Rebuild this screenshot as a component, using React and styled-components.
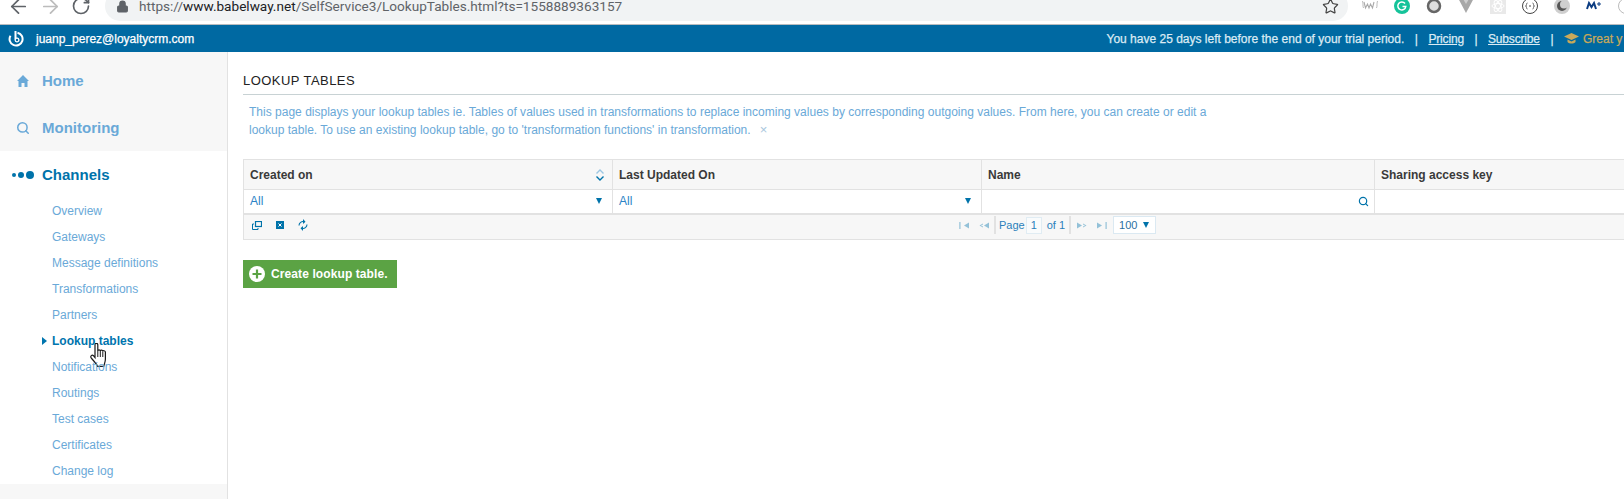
import React from "react";
import styled, { createGlobalStyle } from "styled-components";
import { ArrowLeft, ArrowRight, RotateCw, Lock, Star, Search } from "lucide-react";

const GlobalStyle = createGlobalStyle`
  html, body {
    margin: 0;
    padding: 0;
    background: #fff;
    overflow: hidden;
  }
  body {
    font-family: "Liberation Sans", Arial, sans-serif;
    font-size: 12px;
  }
`;

const Page = styled.div`
  width: 1624px;
  height: 499px;
  display: flex;
  flex-direction: column;
  overflow: hidden;
`;

// browser chrome
const BrowserBar = styled.div`
  height: 25px;
  flex: none;
  box-sizing: border-box;
  display: flex;
  align-items: flex-end;
  background: #fff;
  border-bottom: 1px solid #b9bcbf;
  overflow: hidden;
`;
const NavButtons = styled.div`
  width: 105px;
  flex: none;
  height: 24px;
  display: flex;
  align-items: center;
  gap: 9px;
  padding-left: 7px;
  box-sizing: border-box;
  margin-bottom: 6px;
  color: #5f6368;
`;
const UrlPill = styled.div`
  width: 1243px;
  height: 30px;
  flex: none;
  border-radius: 15px;
  background: #f1f3f4;
  display: flex;
  align-items: center;
  padding: 0 9px 0 11px;
  box-sizing: border-box;
  margin-bottom: 3px;
`;
const UrlText = styled.span`
  font-family: "Roboto", sans-serif;
  font-size: 13.6px;
  color: #5f6368;
  margin-left: 10px;
  flex: 1;
  b {
    font-weight: 400;
    color: #202124;
  }
`;
const Extensions = styled.div`
  flex: 1;
  display: flex;
  align-items: center;
  height: 24px;
  margin-bottom: 6px;
  padding-left: 14px;
  gap: 16px;
`;
const Ext = styled.svg`
  width: 16px;
  height: 16px;
  flex: none;
`;

// blue bar
const TopBar = styled.div`
  height: 27px;
  flex: none;
  background: #0069a2;
  color: #fff;
  display: flex;
  align-items: center;
  font-size: 12px;
  -webkit-text-stroke: 0.25px currentColor;
  white-space: nowrap;
`;
const Logo = styled.svg`
  width: 16px;
  height: 16px;
  margin-left: 8px;
  margin-right: 12px;
  flex: none;
`;
const Email = styled.span`
  flex: 1;
`;
const Notice = styled.span`
  color: #dcebf4;
`;
const TopLink = styled.a`
  color: #dcebf4;
  text-decoration: underline;
  letter-spacing: -0.17px;
`;
const Sep = styled.span`
  color: #dcebf4;
  margin: 0 10.5px;
`;
const Gold = styled.span`
  color: #c9a95a;
  display: inline-flex;
  align-items: center;
  gap: 4px;
  width: 60px;
  flex: none;
  overflow: hidden;
`;

const Body = styled.div`
  flex: 1;
  display: flex;
  min-height: 0;
`;

// sidebar
const Sidebar = styled.nav`
  width: 228px;
  flex: none;
  box-sizing: border-box;
  border-right: 1px solid #e2e2e2;
  background: #f7f7f7;
  padding-top: 5px;
  display: flex;
  flex-direction: column;
`;
const TopItem = styled.div`
  height: 47px;
  display: flex;
  align-items: center;
  font-size: 15px;
  font-weight: 700;
  color: ${(p) => (p.$active ? "#0073aa" : "#6aa9d8")};
`;
const ItemIcon = styled.span`
  width: 42px;
  display: flex;
  justify-content: center;
  padding-left: 4px;
  box-sizing: border-box;
  flex: none;
  align-items: center;
  gap: 2px;
`;
const Dot = styled.i`
  display: block;
  border-radius: 50%;
  background: #0073aa;
  width: ${(p) => p.$s}px;
  height: ${(p) => p.$s}px;
`;
const ChannelSection = styled.div`
  background: #fff;
  height: 333px;
  box-sizing: border-box;
`;
const SubList = styled.ul`
  list-style: none;
  margin: 0;
  padding: 0 0 0 52px;
`;
const SubItem = styled.li`
  position: relative;
  height: 26px;
  line-height: 26px;
  font-size: 12px;
  color: ${(p) => (p.$active ? "#0075ae" : "#6aa9d8")};
  font-weight: ${(p) => (p.$active ? 700 : 400)};
  ${(p) =>
    p.$active &&
    `&::before {
      content: "";
      position: absolute;
      left: -10px;
      top: 9px;
      border-left: 5px solid #0075ae;
      border-top: 4px solid transparent;
      border-bottom: 4px solid transparent;
    }`}
`;
const Cursor = styled.svg`
  position: absolute;
  left: 38px;
  top: 15px;
  width: 18px;
  height: 24px;
`;

// main content
const Main = styled.main`
  flex: 1;
  min-width: 0;
  padding: 20px 0 0 15px;
`;
const Title = styled.h1`
  margin: 0;
  font-size: 13px;
  font-weight: 400;
  color: #222;
  letter-spacing: 0.45px;
  height: 22px;
  line-height: 17px;
  border-bottom: 1px solid #c8d2d4;
`;
const Intro = styled.p`
  margin: 0 0 0 6px;
  padding-top: 9px;
  width: 965px;
  height: 55px;
  font-size: 12px;
  line-height: 17px;
  color: #6aa9d8;
  letter-spacing: 0.01px;
`;
const CloseMark = styled.span`
  margin-left: 9px;
  color: #a9c6dd;
  font-size: 13px;
`;
const Table = styled.div`
  border: 1px solid #e2e2e2;
  border-right: none;
  margin-right: -20px;
`;
const Row = styled.div`
  display: grid;
  grid-template-columns: 369px 369px 393px 1fr;
`;
const HeadCell = styled.div`
  height: 30px;
  box-sizing: border-box;
  background: #f7f7f7;
  border-right: 1px solid #e2e2e2;
  border-bottom: 1px solid #e2e2e2;
  padding: 0 7px 0 6px;
  display: flex;
  align-items: center;
  justify-content: space-between;
  font-weight: 700;
  color: #3a3a3a;
`;
const FilterCell = styled.div`
  height: 23px;
  box-sizing: border-box;
  background: #fff;
  border-right: 1px solid #e2e2e2;
  padding: 0 ${(p) => p.$right || 10}px 1px 6px;
  display: flex;
  align-items: center;
  justify-content: space-between;
  color: #2b83c6;
`;
const Caret = styled.i`
  display: block;
  border-top: 6px solid #0073aa;
  border-left: 3.5px solid transparent;
  border-right: 3.5px solid transparent;
`;
const Toolbar = styled.div`
  height: 26px;
  box-sizing: border-box;
  background: #f7f7f7;
  border-top: 2px solid #e2e2e2;
  padding-bottom: 4px;
  display: flex;
  align-items: center;
`;
const ToolIcons = styled.div`
  display: flex;
  align-items: center;
  gap: 14px;
  padding-left: 8px;
  width: 714px;
  flex: none;
  box-sizing: border-box;
`;
const Pager = styled.div`
  display: flex;
  align-items: center;
  color: #2b7fbb;
  font-size: 11px;
`;
const PagerIcon = styled.svg`
  width: 11px;
  height: 7px;
  margin-right: ${(p) => p.$gap}px;
  opacity: 0.4;
`;
const PagerSep = styled.i`
  display: block;
  width: 2px;
  height: 18px;
  background: #e2e2e2;
  margin: 0 ${(p) => p.$after}px 0 ${(p) => p.$before}px;
`;
const PageBox = styled.span`
  display: inline-block;
  width: 14px;
  height: 15px;
  line-height: 15px;
  background: #f9fbfc;
  border: 1px solid #e0ecf3;
  margin: 0 5px 0 1px;
  text-align: center;
`;
const SizeBox = styled.div`
  display: flex;
  align-items: center;
  justify-content: space-between;
  width: 43px;
  height: 18px;
  box-sizing: border-box;
  background: #fff;
  border: 1px solid #dbe9f2;
  padding: 0 6px 0 5px;
  font-size: 11px;
  color: #2b6f9f;
`;
const CreateButton = styled.button`
  display: flex;
  align-items: center;
  gap: 6px;
  width: 154px;
  height: 28px;
  margin-top: 20px;
  padding: 0 0 0 6px;
  box-sizing: border-box;
  border: none;
  background: #5ba344;
  color: #fff;
  font: 700 12px "Liberation Sans", Arial, sans-serif;
  letter-spacing: 0.1px;
`;

const subItems = [
  "Overview",
  "Gateways",
  "Message definitions",
  "Transformations",
  "Partners",
  "Lookup tables",
  "Notifications",
  "Routings",
  "Test cases",
  "Certificates",
  "Change log",
];

function PagerGlyph({ dir, bar, gap }) {
  return (
    <PagerIcon viewBox="0 0 11 7" $gap={gap}>
      <g fill="#0073aa" transform={dir === "right" ? "" : "translate(11 0) scale(-1 1)"}>
        <path d="M0 .5l5 3-5 3z" />
        {bar ? <rect x="8.500" y="0" width="1.200" height="7" /> : <path d="M6 1.500l3.500 2-3.500 2v-1l2-1-2-1z" />}
      </g>
    </PagerIcon>
  );
}

export default function App() {
  return (
    <Page>
      <GlobalStyle />
      <BrowserBar>
        <NavButtons>
          <ArrowLeft size={23} strokeWidth={1.8} />
          <ArrowRight size={23} strokeWidth={1.8} color="#bcbcbc" />
          <RotateCw size={20} strokeWidth={2} />
        </NavButtons>
        <UrlPill>
          <Lock size={13} fill="#5f6368" color="#5f6368" />
          <UrlText>
            https://<b>www.babelway.net</b>/SelfService3/LookupTables.html?ts=1558889363157
          </UrlText>
          <Star size={17} color="#444" strokeWidth={1.7} />
        </UrlPill>
        <Extensions>
          <Ext viewBox="0 0 16 16">
            <path d="M2 4l1.500 6 2-4 1.500 4 1.500-4 2 4 1.500-6" fill="none" stroke="#aaa" strokeWidth="1.100" />
            <path d="M.5 3c1 3 0 5 1 7M15.500 3c-1 3 0 5-1 7" fill="none" stroke="#bbb" />
          </Ext>
          <Ext viewBox="0 0 16 16">
            <circle cx="8" cy="8" r="8" fill="#15c39a" />
            <path d="M11 5.500a4 4 0 1 0 .8 3H8.500" fill="none" stroke="#fff" strokeWidth="1.500" />
          </Ext>
          <Ext viewBox="0 0 16 16">
            <circle cx="8" cy="8" r="6" fill="#dedede" stroke="#666" strokeWidth="2.500" />
          </Ext>
          <Ext viewBox="0 0 16 16">
            <path d="M0 0h16L8 15z" fill="#a8a8a8" />
            <path d="M4.500 0h7L8 6z" fill="#cfcfcf" />
          </Ext>
          <Ext viewBox="0 0 16 16">
            <rect width="16" height="16" fill="#e9e9e9" />
            <g fill="none" stroke="#fff">
              <ellipse cx="8" cy="8" rx="6" ry="2.500" />
              <ellipse cx="8" cy="8" rx="6" ry="2.500" transform="rotate(60 8 8)" />
              <ellipse cx="8" cy="8" rx="6" ry="2.500" transform="rotate(120 8 8)" />
            </g>
          </Ext>
          <Ext viewBox="0 0 16 16">
            <circle cx="8" cy="8" r="7.500" fill="#fff" stroke="#444" />
            <path d="M5.500 5c-1 0-1 1-1 1.500S4.500 8 3.500 8c1 0 1 1 1 1.500s0 1.500 1 1.500M10.500 5c1 0 1 1 1 1.500s0 1.500 1 1.500c-1 0-1 1-1 1.500s0 1.500-1 1.500" fill="none" stroke="#444" strokeWidth=".8" />
            <path d="M7 8h2" stroke="#444" />
          </Ext>
          <Ext viewBox="0 0 16 16">
            <circle cx="8" cy="8" r="8" fill="#cfcfcf" />
            <circle cx="8" cy="8" r="5" fill="#555" />
            <circle cx="10" cy="6.500" r="4" fill="#cfcfcf" />
          </Ext>
          <Ext viewBox="0 0 16 16">
            <path d="M1 11l2-6 2.500 4L8 5l2 6" fill="none" stroke="#0b3c82" strokeWidth="2" />
            <path d="M11 6h4M13 4v4" stroke="#0b3c82" />
          </Ext>
          <Ext viewBox="0 0 16 16">
            <circle cx="8" cy="8" r="7.500" fill="none" stroke="#bbb" />
          </Ext>
        </Extensions>
      </BrowserBar>

      <TopBar>
        <Logo viewBox="0 0 16 16">
          <path d="M9.500 1.700a6.500 6.500 0 1 1-7 3" fill="none" stroke="#fff" strokeWidth="2" />
          <path d="M6.500 0h2v6.500a2.500 2.500 0 1 1-2 2.500z" fill="#fff" />
          <circle cx="9" cy="9" r="1.200" fill="#0069a2" />
        </Logo>
        <Email>juanp_perez@loyaltycrm.com</Email>
        <Notice>You have 25 days left before the end of your trial period.</Notice>
        <Sep>|</Sep>
        <TopLink>Pricing</TopLink>
        <Sep>|</Sep>
        <TopLink>Subscribe</TopLink>
        <Sep>|</Sep>
        <Gold>
          <svg width="15" height="12" viewBox="0 0 15 12" style={{ flex: "none" }}>
            <path d="M7.500 0L15 3.500 7.500 7 0 3.500z" fill="#c9a95a" />
            <path d="M3.500 6.500v2.500c2 2 6 2 8 0V6.500L7.500 8.400z" fill="#c9a95a" />
          </svg>
          Great y
        </Gold>
      </TopBar>

      <Body>
        <Sidebar>
          <TopItem>
            <ItemIcon>
              <svg width="12" height="12" viewBox="0 0 12 12">
                <path d="M6 0l6 6h-1.500v6h-3V8h-3v4h-3V6H0z" fill="#6aa9d8" />
              </svg>
            </ItemIcon>
            Home
          </TopItem>
          <TopItem>
            <ItemIcon><Search size={14} strokeWidth={2.6} /></ItemIcon>
            Monitoring
          </TopItem>
          <ChannelSection>
            <TopItem $active>
              <ItemIcon>
                <Dot $s={4} /><Dot $s={6} /><Dot $s={8} />
              </ItemIcon>
              Channels
            </TopItem>
            <SubList>
              {subItems.map((label) => (
                <SubItem key={label} $active={label === "Lookup tables"}>
                  {label}
                  {label === "Lookup tables" && (
                    <Cursor viewBox="0 0 18 24">
                      <path
                        d="M5 1.800c0-2 2.800-2 2.800 0v6.200c0-1.500 2.500-1.500 2.500 0 0-1.200 2.500-1.200 2.500.3 0-1 2.600-.8 2.600 .8v6.900c0 3-.9 4.500-1.700 7.400H7.500C6.500 20.500 3.500 18 1.200 14.800c-1.200-1.800 .8-3.400 2.400-2L5 14.500z"
                        fill="#fff"
                        stroke="#1a1a1a"
                        strokeWidth="1.200"
                      />
                      <path d="M7.800 8v6M10.300 8v6M12.800 8.300v5.700" stroke="#1a1a1a" strokeWidth="1" />
                    </Cursor>
                  )}
                </SubItem>
              ))}
            </SubList>
          </ChannelSection>
        </Sidebar>

        <Main>
          <Title>LOOKUP TABLES</Title>
          <Intro>
            This page displays your lookup tables ie. Tables of values used in transformations to replace incoming values by corresponding outgoing values. From here, you can create or edit a lookup table. To use an existing lookup table, go to 'transformation functions' in transformation.
            <CloseMark>×</CloseMark>
          </Intro>
          <Table>
            <Row>
              <HeadCell>
                Created on
                <svg width="10" height="12" viewBox="0 0 10 12" fill="none" strokeWidth="1.400">
                  <path d="M1.500 4.500L5 1l3.500 3.500" stroke="#9cc6e2" />
                  <path d="M1.500 7.500L5 11l3.500-3.500" stroke="#0073aa" />
                </svg>
              </HeadCell>
              <HeadCell>Last Updated On</HeadCell>
              <HeadCell>Name</HeadCell>
              <HeadCell>Sharing access key</HeadCell>
            </Row>
            <Row>
              <FilterCell>All<Caret /></FilterCell>
              <FilterCell>All<Caret /></FilterCell>
              <FilterCell $right={5}>
                <span />
                <Search size={11} color="#0073aa" strokeWidth={2.6} />
              </FilterCell>
              <FilterCell />
            </Row>
            <Toolbar>
              <ToolIcons>
                <svg width="10" height="9" viewBox="0 0 10 9" fill="none" stroke="#0073aa">
                  <rect x="3.500" y="0.500" width="6" height="5" strokeWidth="1.200" />
                  <path d="M2 3H.5v5.500H6V7" />
                </svg>
                <svg width="8" height="8" viewBox="0 0 8 8">
                  <rect width="8" height="8" fill="#0073aa" />
                  <path d="M2.500 2.500l3 3M5.500 2.500l-3 3" stroke="#fff" />
                </svg>
                <svg width="10" height="12" viewBox="0 0 10 12" fill="none" stroke="#0073aa" strokeWidth="1.100">
                  <path d="M1 6.500a4 4 0 0 1 5-3.800M9 5.500a4 4 0 0 1-5 3.800" />
                  <path d="M5 0l2.500 2.700L5 5zM5 7l-2.500 2.300L5 12z" fill="#0073aa" stroke="none" />
                </svg>
              </ToolIcons>
              <Pager>
                <PagerGlyph dir="left" bar gap={9} />
                <PagerGlyph dir="left" gap={5} />
                <PagerSep $before={0} $after={3} />
                Page
                <PageBox>1</PageBox>
                of 1
                <PagerSep $before={4} $after={6} />
                <PagerGlyph dir="right" gap={9} />
                <PagerGlyph dir="right" bar gap={5} />
                <SizeBox>100 <Caret /></SizeBox>
              </Pager>
            </Toolbar>
          </Table>
          <CreateButton>
            <svg width="16" height="16" viewBox="0 0 16 16">
              <circle cx="8" cy="8" r="8" fill="#fff" />
              <path d="M8 3.500v9M3.500 8h9" stroke="#5ba344" strokeWidth="2.200" />
            </svg>
            Create lookup table.
          </CreateButton>
        </Main>
      </Body>
    </Page>
  );
}
